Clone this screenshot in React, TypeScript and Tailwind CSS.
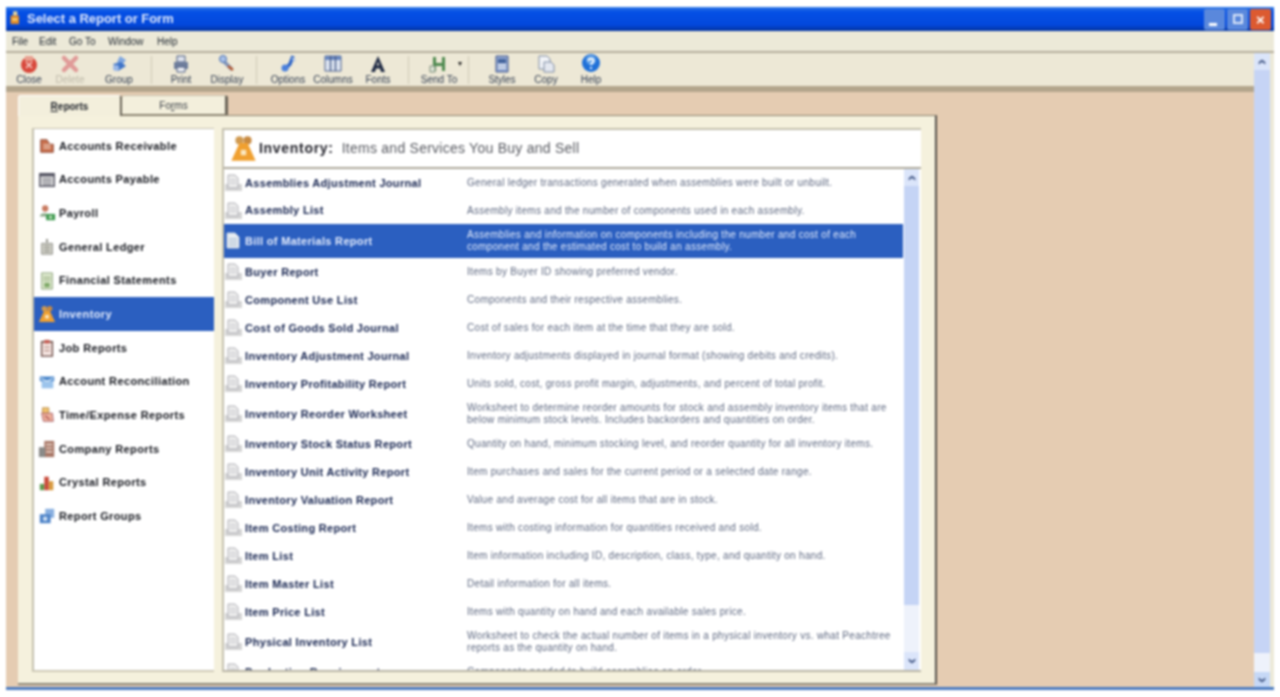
import React from "react";

const sideItems = [
  { label: "Accounts Receivable", icon: "receivable" },
  { label: "Accounts Payable", icon: "payable" },
  { label: "Payroll", icon: "payroll" },
  { label: "General Ledger", icon: "ledger" },
  { label: "Financial Statements", icon: "statements" },
  { label: "Inventory", icon: "inventory", active: true },
  { label: "Job Reports", icon: "job" },
  { label: "Account Reconciliation", icon: "recon" },
  { label: "Time/Expense Reports", icon: "time" },
  { label: "Company Reports", icon: "company" },
  { label: "Crystal Reports", icon: "crystal" },
  { label: "Report Groups", icon: "groups" },
];

const reports = [
  { name: "Assemblies Adjustment Journal", desc: "General ledger transactions generated when assemblies were built or unbuilt.", h: "h-[28px]" },
  { name: "Assembly List", desc: "Assembly items and the number of components used in each assembly.", h: "h-[27px]" },
  { name: "Bill of Materials Report", desc: "Assemblies and information on components including the number and cost of each component and the estimated cost to build an assembly.", h: "h-[34px]", active: true },
  { name: "Buyer Report", desc: "Items by Buyer ID showing preferred vendor.", h: "h-[28px]" },
  { name: "Component Use List", desc: "Components and their respective assemblies.", h: "h-[28px]" },
  { name: "Cost of Goods Sold Journal", desc: "Cost of sales for each item at the time that they are sold.", h: "h-[28px]" },
  { name: "Inventory Adjustment Journal", desc: "Inventory adjustments displayed in journal format (showing debits and credits).", h: "h-[28px]" },
  { name: "Inventory Profitability Report", desc: "Units sold, cost, gross profit margin, adjustments, and percent of total profit.", h: "h-[28px]" },
  { name: "Inventory Reorder Worksheet", desc: "Worksheet to determine reorder amounts for stock and assembly inventory items that are below minimum stock levels.  Includes backorders and quantities on order.", h: "h-[32px]" },
  { name: "Inventory Stock Status Report", desc: "Quantity on hand, minimum stocking level, and reorder quantity for all inventory items.", h: "h-[28px]" },
  { name: "Inventory Unit Activity Report", desc: "Item purchases and sales for the current period or a selected date range.", h: "h-[28px]" },
  { name: "Inventory Valuation Report", desc: "Value and average cost for all items that are in stock.", h: "h-[28px]" },
  { name: "Item Costing Report", desc: "Items with costing information for quantities received and sold.", h: "h-[28px]" },
  { name: "Item List", desc: "Item information including ID, description, class, type, and quantity on hand.", h: "h-[28px]" },
  { name: "Item Master List", desc: "Detail information for all items.", h: "h-[28px]" },
  { name: "Item Price List", desc: "Items with quantity on hand and each available sales price.", h: "h-[28px]" },
  { name: "Physical Inventory List", desc: "Worksheet to check the actual number of items in a physical inventory vs. what Peachtree reports as the quantity on hand.", h: "h-[32px]" },
  { name: "Production Requirements", desc: "Components needed to build assemblies on order.", h: "h-[28px]" },
];

const toolbar = [
  { label: "Close", icon: "close", w: "w-[42px]" },
  { label: "Delete", icon: "delete", w: "w-[40px]", off: true },
  { label: "Group", icon: "group", w: "w-[58px]" },
  { sep: true, w: "w-[6px]" },
  { label: "Print", icon: "print", w: "w-[54px]" },
  { label: "Display", icon: "display", w: "w-[38px]" },
  { sep: true, w: "w-[20px]" },
  { label: "Options", icon: "options", w: "w-[44px]" },
  { label: "Columns", icon: "columns", w: "w-[46px]" },
  { label: "Fonts", icon: "fonts", w: "w-[44px]" },
  { sep: true, w: "w-[16px]" },
  { label: "Send To", icon: "send", w: "w-[46px]", menu: true },
  { sep: true, w: "w-[12px]" },
  { label: "Styles", icon: "styles", w: "w-[56px]" },
  { label: "Copy", icon: "copy", w: "w-[32px]" },
  { label: "Help", icon: "help", w: "w-[58px]" },
];

function Icon({ name, className = "w-[18px] h-[18px]" }: { name: string; className?: string }) {
  const shapes: Record<string, React.ReactNode> = {
    close: (
      <>
        <circle cx="10" cy="11" r="8" fill="#d8483c" />
        <path d="M6 2h8v5H6z" fill="#e8a090" />
        <path d="M7 8l6 6M13 8l-6 6" stroke="#f5d0c8" strokeWidth="1.6" />
      </>
    ),
    delete: <path d="M4 4l12 12M16 4L4 16" stroke="#e09a98" strokeWidth="4.5" strokeLinecap="round" />,
    group: (
      <>
        <path d="M11 2l6 4-4 5-5-3z" fill="#7fa6e0" />
        <path d="M4 10l8-2 5 4-8 5z" fill="#3f74c8" />
        <circle cx="7" cy="14" r="3" fill="#9ab8e8" />
      </>
    ),
    print: (
      <>
        <path d="M6 2h8v6H6z" fill="#dfe4ee" stroke="#4a5a80" />
        <path d="M3 8h14v7H3z" fill="#6f7e9c" />
        <path d="M6 13h8v5H6z" fill="#eef0f5" stroke="#4a5a80" />
      </>
    ),
    display: (
      <>
        <path d="M5 3l5 5 6 6-2 3-6-6-5-5z" fill="#7f92b8" />
        <circle cx="6" cy="5" r="3.5" fill="#a8c0e8" stroke="#4a70b0" />
        <path d="M11 12l5 4" stroke="#b85a30" strokeWidth="2.5" />
      </>
    ),
    options: (
      <>
        <path d="M15 2l-3 8-5 5" stroke="#2f66c8" strokeWidth="3.5" fill="none" />
        <circle cx="7" cy="14" r="3.5" fill="#4a80dc" />
        <path d="M14 4l3 3" stroke="#a8c0e8" strokeWidth="2" />
      </>
    ),
    columns: (
      <>
        <path d="M2 2h16v15H2z" fill="#dfe6f2" stroke="#4a5e8c" />
        <path d="M2 2h16v4H2z" fill="#6a88c0" />
        <path d="M7.5 2v15M12.5 2v15" stroke="#4a5e8c" strokeWidth="1.4" />
      </>
    ),
    fonts: <path d="M10 2L3 18h4l1-3.5h4l1 3.5h4zM8.8 11.5L10 7.5l1.2 4z" fill="#1f2a44" fillRule="evenodd" />,
    send: (
      <>
        <path d="M4 3h3v6h6V3h3v14h-3v-5H7v5H4z" fill="#4f8a50" />
        <path d="M1 12h5v6H1z" fill="#dfe6d8" stroke="#7a8a78" />
      </>
    ),
    styles: (
      <>
        <path d="M4 2h12v16H4z" fill="#8ea4d0" stroke="#44598c" />
        <path d="M6 5h8v4H6z" fill="#44649c" />
        <path d="M6 11h8M6 14h8" stroke="#eef2f8" strokeWidth="1.5" />
      </>
    ),
    copy: (
      <>
        <path d="M3 2h8l3 3v10H3z" fill="#f2f4f8" stroke="#7f8ca4" />
        <path d="M8 8h7l3 3v7H8z" fill="#e4e8f0" stroke="#7f8ca4" />
      </>
    ),
    help: (
      <>
        <circle cx="10" cy="9" r="9" fill="#1f70d8" />
        <circle cx="10" cy="6" r="5" fill="#7fb8f0" opacity=".7" />
        <path d="M7.5 7c0-3 5-3 5 0 0 2-2.5 2-2.5 4M10 13v2" stroke="#fff" strokeWidth="1.8" fill="none" />
      </>
    ),
    receivable: (
      <>
        <path d="M3 3h7l3 5h4v9H3z" fill="#c8704e" stroke="#8a4a38" />
        <path d="M6 9h8M6 12h8" stroke="#f2d8c8" strokeWidth="1.5" />
      </>
    ),
    payable: (
      <>
        <path d="M2 3h16v14H2z" fill="#dcdcdc" stroke="#4a4a58" strokeWidth="1.5" />
        <path d="M2 3h16v3H2z" fill="#5a5a68" />
        <path d="M5 9h10M5 12h10M5 15h10" stroke="#5a5a68" />
      </>
    ),
    payroll: (
      <>
        <circle cx="8" cy="5" r="3.5" fill="#c87a60" />
        <path d="M2 14c0-5 10-5 10 0z" fill="#8aa888" />
        <path d="M9 11h10v7H9z" fill="#3f9a50" />
        <circle cx="14" cy="14.5" r="1.8" fill="#cfe8c8" />
      </>
    ),
    ledger: (
      <>
        <path d="M9 1h2v4H9z" fill="#8a8a82" />
        <path d="M4 6h12v12H4z" fill="#cfcfc6" stroke="#8a8a82" />
        <path d="M7 9h6M7 12h6M7 15h6" stroke="#84847c" />
      </>
    ),
    statements: (
      <>
        <path d="M4 1h12v18H4z" fill="#dce8cc" stroke="#8aa078" />
        <path d="M6 6h8M6 9h8" stroke="#88a070" />
        <path d="M7 12h6v5H7z" fill="#7fa868" />
      </>
    ),
    inventory: (
      <>
        <circle cx="7" cy="4" r="3" fill="#d09a50" />
        <circle cx="13" cy="4" r="3" fill="#c88a40" />
        <path d="M7 6h6l6 13H1z" fill="#f0a030" />
        <path d="M8 11h4v4H8z" fill="#fbe8c0" />
      </>
    ),
    job: (
      <>
        <path d="M4 3h12v16H4z" fill="#f6e6e2" stroke="#6a4a44" strokeWidth="1.5" />
        <path d="M7 1h6v4H7z" fill="#c45a50" />
        <path d="M7 9h6M7 13h6" stroke="#9a6a60" />
      </>
    ),
    recon: (
      <>
        <path d="M2 4h16v5H2z" fill="#3f7fc8" />
        <path d="M4 9h13v8H4z" fill="#9cc4ec" />
        <path d="M3 6l7 3 7-3" stroke="#dcecf8" strokeWidth="1.5" fill="none" />
      </>
    ),
    time: (
      <>
        <path d="M5 2h7v6H5z" fill="#f2c46e" stroke="#b88a48" />
        <path d="M4 8h12l1 9H6z" fill="#eeb09a" stroke="#a8606a" />
        <path d="M8 11l5 4" stroke="#b05a5a" strokeWidth="1.5" />
      </>
    ),
    company: (
      <>
        <path d="M7 1h11v18H7z" fill="#a87868" />
        <path d="M1 8h7v11H1z" fill="#8a8a88" />
        <path d="M9 5h7M9 9h7M9 13h7" stroke="#f0dcd0" strokeWidth="1.5" />
      </>
    ),
    crystal: (
      <>
        <path d="M2 11h5v7H2z" fill="#5f9a50" />
        <path d="M7 3h5v15H7z" fill="#c84a3a" />
        <path d="M12 8h5v10h-5z" fill="#d89a40" />
      </>
    ),
    groups: (
      <>
        <path d="M8 2h10v10H8z" fill="#8ab0e0" />
        <path d="M2 8h12v10H2z" fill="#4f84c8" />
        <circle cx="8" cy="13" r="2.5" fill="#cfe0f4" />
      </>
    ),
    page: (
      <>
        <path d="M1 11h17v7H1z" fill="#d4d4d4" />
        <path d="M4 2h7l3 3v10H4z" fill="#ececec" stroke="#b0b0b6" />
        <path d="M6 7h6M6 10h6" stroke="#c4c4ca" />
      </>
    ),
    pageActive: (
      <>
        <path d="M3 2h8l4 4v11H3z" fill="#e8edf2" stroke="#c4d0e0" />
        <path d="M5 8h8M5 11h8M5 14h8" stroke="#9ab0c8" />
      </>
    ),
    app: (
      <>
        <path d="M6 1h5v5H6z" fill="#e8d8a0" />
        <path d="M3 6h10v10H3z" fill="#e08a28" />
        <path d="M5 9h6v3H5z" fill="#f8d070" />
      </>
    ),
  };
  return (
    <svg viewBox="0 0 20 20" className={className}>
      {shapes[name]}
    </svg>
  );
}

function Arrow({ down }: { down?: boolean }) {
  return (
    <svg viewBox="0 0 12 12" className="w-[10px] h-[10px]">
      <path d={down ? "M2 3l4 3 4-3v3l-4 3-4-3z" : "M2 9l4-3 4 3V6L6 3 2 6z"} fill="#4a5f8c" />
    </svg>
  );
}

export default function App() {
  return (
    <div className="w-[1280px] h-[697px] bg-white pt-[7px] px-[6px] pb-[7px] overflow-hidden font-['Liberation_Sans',Arial,sans-serif] [filter:blur(1px)]">
      <div className="h-full flex flex-col bg-[#ece9d8]">
        {/* title bar */}
        <div className="h-[24px] flex items-center pl-[2px] pr-[3px] bg-[linear-gradient(to_bottom,#2f78e4_0%,#0550e6_20%,#0348dc_75%,#03329c_100%)]">
          <Icon name="app" className="w-[17px] h-[20px]" />
          <span className="ml-[2px] text-[13px] font-bold text-[#dfe8fb] tracking-[-0.03px]">Select a Report or Form</span>
          <div className="ml-auto flex gap-[2px]">
            <div className="w-[21px] h-[21px] rounded-[2px] bg-[#5a88dc] flex items-end pl-[5px] pb-[4px]">
              <div className="w-[8px] h-[3px] bg-white" />
            </div>
            <div className="w-[21px] h-[21px] rounded-[2px] bg-[#5a88dc] flex items-center justify-center">
              <div className="w-[10px] h-[10px] border-2 border-[#dbe6f8]" />
            </div>
            <div className="w-[21px] h-[21px] rounded-[2px] bg-[#dc5a30] flex items-center justify-center text-white text-[15px] font-bold leading-none">×</div>
          </div>
        </div>

        {/* menu */}
        <div className="h-[22px] flex items-center pl-[6px] border-b-2 border-[#b5ae9c] text-[10px] text-[#222a33]">
          <span className="w-[27px]">File</span>
          <span className="w-[30px]">Edit</span>
          <span className="w-[39px]">Go To</span>
          <span className="w-[49px]">Window</span>
          <span>Help</span>
        </div>

        <div className="flex-1 flex min-h-0 pr-[4px]">
          <div className="flex-1 flex flex-col min-w-0">
            {/* toolbar */}
            <div className="h-[33px] flex items-center pl-[2px] bg-[#ede8d6]">
              {toolbar.map((t, i) =>
                t.sep ? (
                  <div key={i} className={`${t.w} h-[28px] flex justify-center`}>
                    <div className="w-[1px] h-full bg-[#cfc9b6]" />
                  </div>
                ) : (
                  <div key={i} className={`${t.w} flex flex-col items-center relative`}>
                    <Icon name={t.icon as string} className="w-[20px] h-[20px]" />
                    {t.menu && <span className="absolute right-[0px] top-[6px] text-[8px] leading-none text-[#222]">▾</span>}
                    <span className={`text-[10px] leading-[11px] whitespace-nowrap ${t.off ? "text-[#bdb8a8]" : "text-[#303c50]"}`}>{t.label}</span>
                  </div>
                )
              )}
            </div>
            <div className="h-[6px] bg-[#b3a58c]" />

            {/* peach area */}
            <div className="flex-1 min-h-0 bg-[#e5ccb2] pl-[12px] pt-[3px] pb-[2px] flex flex-col items-start">
              <div className="h-[20px] flex">
                <div className="w-[104px] h-[21px] bg-[#f3efdc] rounded-t-[3px] border-t border-l border-white border-r-2 border-r-[#6a6458] flex items-center justify-center text-[10px] font-bold text-[#1c2028] relative z-10">
                  <span><u>R</u>eports</span>
                </div>
                <div className="w-[106px] h-[20px] bg-[#f3efdc] rounded-t-[3px] border-t border-[#c8c2ae] border-r-3 border-r-[#6a6458] border-b border-b-[#8a8270] flex items-center justify-center text-[10px] text-[#3a4048]">
                  <span>Fo<u>r</u>ms</span>
                </div>
              </div>

              <div className="w-[919px] flex-1 min-h-0 bg-[#f5f1dd] border-t border-[#8a8270] border-r-2 border-r-[#55504a] border-b-2 border-b-[#8a8578] pl-[14px] pr-[14px] pt-[12px] pb-[11px] flex gap-[8px]">
                {/* left list */}
                <div className="w-[182px] bg-white border-l-2 border-t border-[#c4c0ae] border-b-2 border-b-[#cfcab6] flex flex-col">
                  {sideItems.map((s) => (
                    <div
                      key={s.label}
                      className={`h-[33.7px] shrink-0 flex items-center pl-[4px] text-[11px] font-bold tracking-[0.38px] ${s.active ? "bg-[#2b5fc0] text-[#e4ecfc]" : "text-[#14161d]"}`}
                    >
                      <Icon name={s.icon} className="w-[18px] h-[18px] shrink-0" />
                      <span className="ml-[3px] whitespace-nowrap">{s.label}</span>
                    </div>
                  ))}
                </div>

                {/* report panel */}
                <div className="flex-1 min-w-0 bg-white border-l-2 border-t-2 border-[#c4c0ae] border-b-2 border-b-[#b8b4a4] flex flex-col">
                  <div className="h-[39px] shrink-0 border-b-2 border-[#aca89a] flex items-center pl-[6px]">
                    <Icon name="inventory" className="w-[27px] h-[27px] shrink-0" />
                    <span className="ml-[2px] text-[14px] font-bold text-[#24242c] tracking-[0.7px]">Inventory:</span>
                    <span className="ml-[8px] text-[14px] text-[#56585f] tracking-[0.25px]">Items and Services You Buy and Sell</span>
                  </div>
                  <div className="flex-1 min-h-0 flex">
                    <div className="w-[679px] overflow-hidden">
                      {reports.map((r) => (
                        <div
                          key={r.name}
                          className={`${r.h} flex items-center ${r.active ? "bg-[#2b5fc0]" : ""}`}
                        >
                          <Icon name={r.active ? "pageActive" : "page"} className="w-[20px] h-[20px] shrink-0" />
                          <span className={`ml-[1px] w-[222px] shrink-0 text-[11px] font-bold whitespace-nowrap tracking-[0.32px] ${r.active ? "text-[#e4ecfc]" : "text-[#14224e]"}`}>
                            {r.name}
                          </span>
                          <span className={`w-[430px] text-[10px] leading-[12px] tracking-[0.3px] ${r.active ? "text-[#e4ecfc]" : "text-[#5e6880]"}`}>
                            {r.desc}
                          </span>
                        </div>
                      ))}
                    </div>
                    {/* inner scrollbar */}
                    <div className="ml-[1px] w-[15px] flex flex-col bg-[#eef2fb]">
                      <div className="h-[17px] flex items-center justify-center bg-[#dbe5fa]"><Arrow /></div>
                      <div className="h-[419px] bg-[#c5d4f5]" />
                      <div className="flex-1" />
                      <div className="h-[18px] flex items-center justify-center bg-[#dbe5fa]"><Arrow down /></div>
                    </div>
                    <div className="w-[1px]" />
                  </div>
                </div>
              </div>
            </div>
          </div>

          {/* outer scrollbar */}
          <div className="w-[16px] flex flex-col bg-[#eef2fb]">
            <div className="h-[17px] flex items-center justify-center bg-[#dbe5fa]"><Arrow /></div>
            <div className="h-[583px] bg-[#c6d4f5]" />
            <div className="flex-1" />
            <div className="h-[15px] flex items-center justify-center bg-[#c6d8f6]"><Arrow down /></div>
          </div>
        </div>
        <div className="h-[3px] bg-[#4a7ac0]" />
      </div>
    </div>
  );
}
